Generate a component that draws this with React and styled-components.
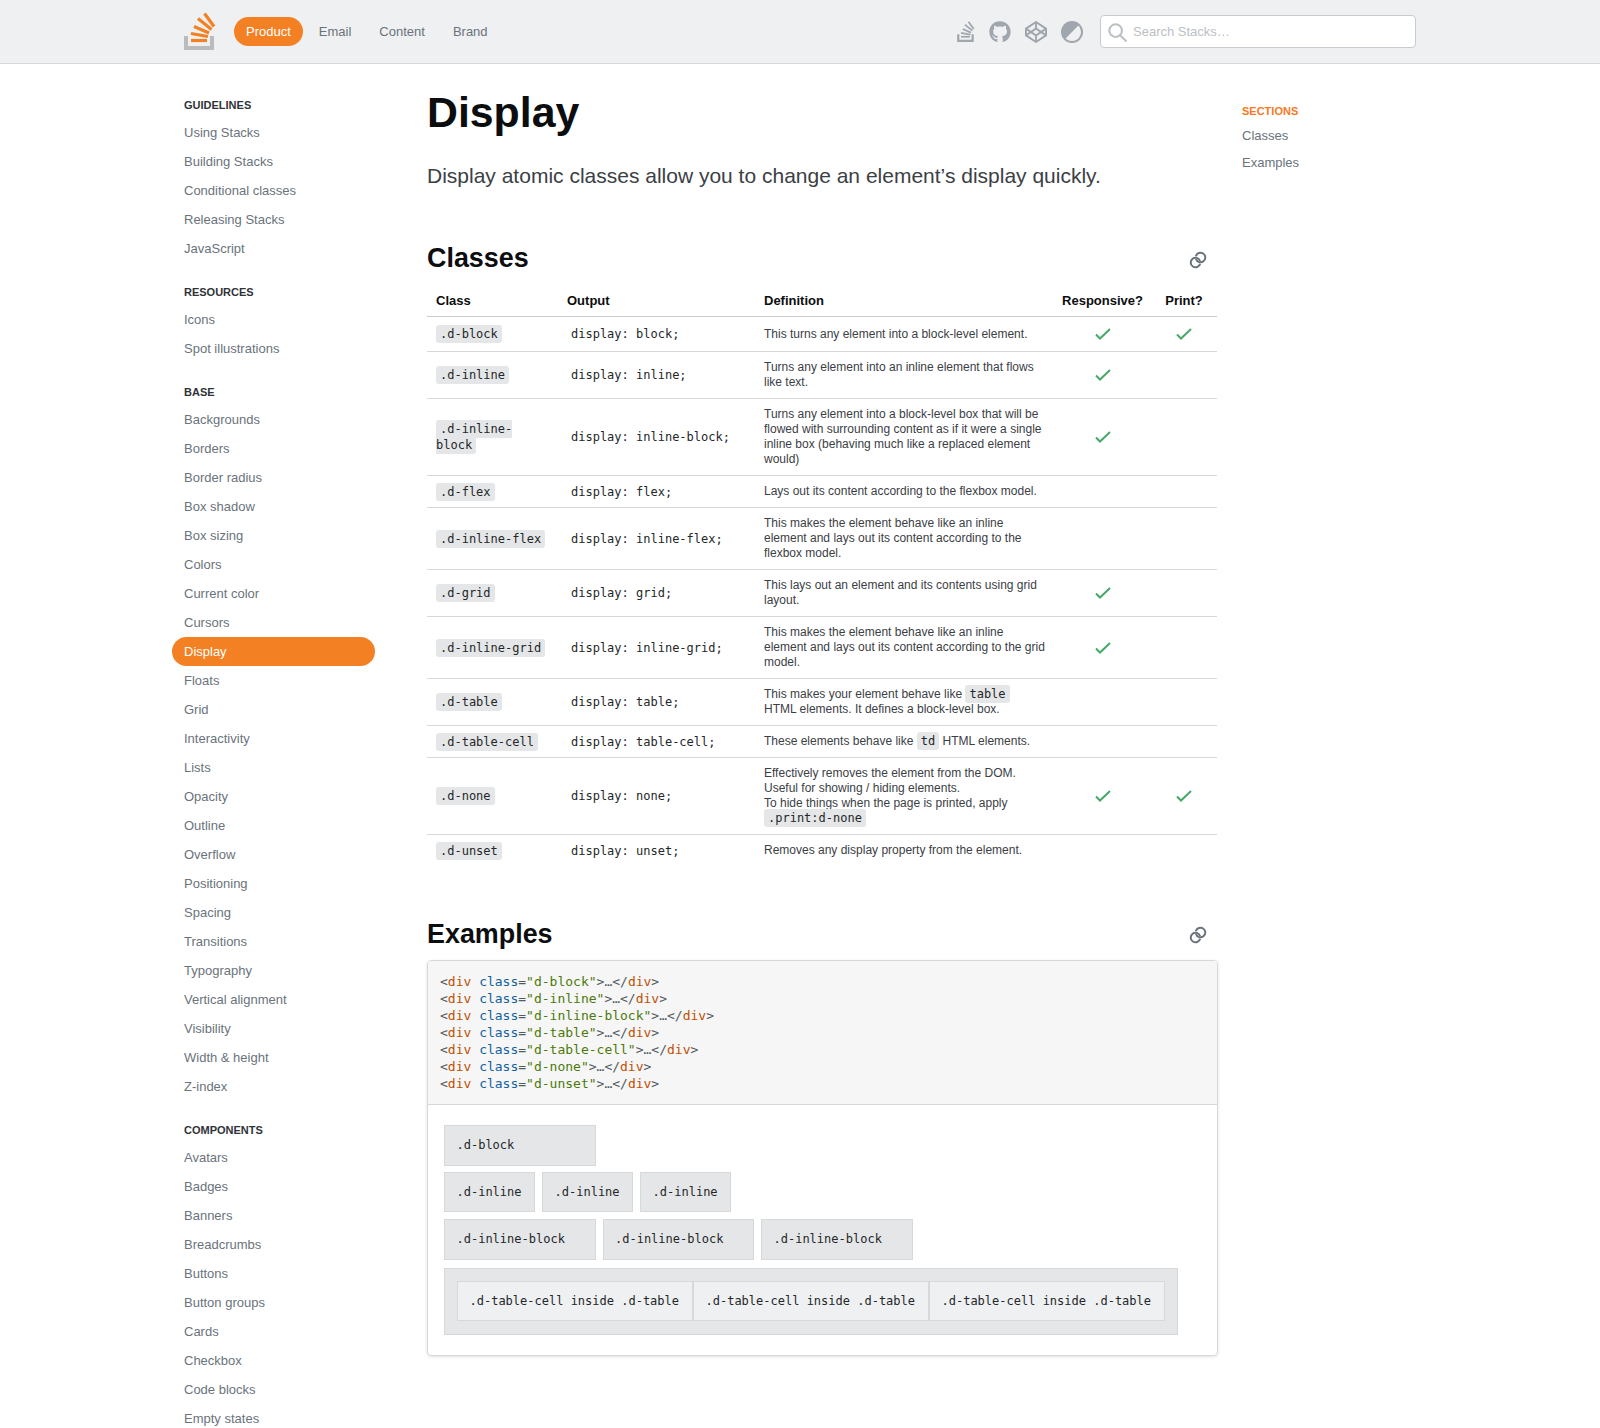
import React from 'react'
import styled, { createGlobalStyle } from 'styled-components'
import { FaGithub, FaCodepen } from 'react-icons/fa'

const mono = `"DejaVu Sans Mono", "Liberation Mono", monospace`

const GlobalStyle = createGlobalStyle`
  html, body {
    margin: 0;
    padding: 0;
    height: 1428px;
    overflow: hidden;
    background: #fff;
    font-family: "Liberation Sans", Arial, sans-serif;
    font-size: 13px;
    color: #3b4045;
  }
`

const navGroups = [
  {
    title: 'Guidelines',
    items: ['Using Stacks', 'Building Stacks', 'Conditional classes', 'Releasing Stacks', 'JavaScript'],
  },
  { title: 'Resources', items: ['Icons', 'Spot illustrations'] },
  {
    title: 'Base',
    items: [
      'Backgrounds', 'Borders', 'Border radius', 'Box shadow', 'Box sizing', 'Colors', 'Current color',
      'Cursors', 'Display', 'Floats', 'Grid', 'Interactivity', 'Lists', 'Opacity', 'Outline', 'Overflow',
      'Positioning', 'Spacing', 'Transitions', 'Typography', 'Vertical alignment', 'Visibility',
      'Width & height', 'Z-index',
    ],
  },
  {
    title: 'Components',
    items: [
      'Avatars', 'Badges', 'Banners', 'Breadcrumbs', 'Buttons', 'Button groups', 'Cards', 'Checkbox',
      'Code blocks', 'Empty states',
    ],
  },
]

const Code = styled.code`
  font-family: ${mono};
  font-size: 12px;
  background: #e4e6e8;
  color: #242729;
  padding: 2px 4px;
  border-radius: 3px;
  box-decoration-break: slice;
`

const rows = [
  { name: '.d-block', output: 'display: block;', def: 'This turns any element into a block-level element.', r: true, p: true },
  { name: '.d-inline', output: 'display: inline;', def: 'Turns any element into an inline element that flows like text.', r: true },
  {
    name: '.d-inline-block',
    output: 'display: inline-block;',
    def: 'Turns any element into a block-level box that will be flowed with surrounding content as if it were a single inline box (behaving much like a replaced element would)',
    r: true,
  },
  { name: '.d-flex', output: 'display: flex;', def: 'Lays out its content according to the flexbox model.' },
  {
    name: '.d-inline-flex',
    output: 'display: inline-flex;',
    def: 'This makes the element behave like an inline element and lays out its content according to the flexbox model.',
  },
  { name: '.d-grid', output: 'display: grid;', def: 'This lays out an element and its contents using grid layout.', r: true },
  {
    name: '.d-inline-grid',
    output: 'display: inline-grid;',
    def: 'This makes the element behave like an inline element and lays out its content according to the grid model.',
    r: true,
  },
  {
    name: '.d-table',
    output: 'display: table;',
    def: (
      <>
        This makes your element behave like <Code>table</Code> HTML elements. It defines a block-level box.
      </>
    ),
  },
  {
    name: '.d-table-cell',
    output: 'display: table-cell;',
    def: (
      <>
        These elements behave like <Code>td</Code> HTML elements.
      </>
    ),
  },
  {
    name: '.d-none',
    output: 'display: none;',
    def: (
      <>
        Effectively removes the element from the DOM.
        <br />
        Useful for showing / hiding elements.
        <br />
        To hide things when the page is printed, apply <Code>.print:d-none</Code>
      </>
    ),
    r: true,
    p: true,
  },
  { name: '.d-unset', output: 'display: unset;', def: 'Removes any display property from the element.' },
]

const snippets = ['d-block', 'd-inline', 'd-inline-block', 'd-table', 'd-table-cell', 'd-none', 'd-unset']

const Logo = ({ width, height, tray, bars }) => (
  <svg width={width} height={height} viewBox="0 0 32 38" fill="none">
    <path d="M2 24v12h26V24" stroke={tray} strokeWidth="4" />
    <g stroke={bars} strokeWidth="3.2">
      <path d="M7 28.5h16" />
      <path d="M7 21.5l17 3" />
      <path d="M10 14.5l15 6.5" />
      <path d="M14 6.5l13.5 11" />
      <path d="M20.5 1.5l9.5 13" />
    </g>
  </svg>
)

const Contrast = () => (
  <svg width="22" height="22" viewBox="0 0 22 22">
    <circle cx="11" cy="11" r="11" fill="#9fa6ad" />
    <path d="M17.4 4.6A9 9 0 0 1 4.6 17.4z" fill="#eff0f1" />
  </svg>
)

const SearchGlyph = () => (
  <svg width="19" height="19" viewBox="0 0 18 18" fill="none" stroke="#bbc0c4" strokeWidth="2">
    <circle cx="7.2" cy="7.2" r="6" />
    <path d="M11.5 11.5L17.5 17.5" />
  </svg>
)

const LinkGlyph = () => (
  <svg width="18" height="18" viewBox="0 0 18 18" fill="none" stroke="#6a737c" strokeWidth="2">
    <path d="M6.84 5.34A4.8 4.8 0 1 1 6.93 7.98" />
    <path d="M11.16 12.66A4.8 4.8 0 1 1 11.07 10.02" />
  </svg>
)

const CheckGlyph = () => (
  <svg width="18" height="18" viewBox="0 0 18 18" fill="none" stroke="#48a868" strokeWidth="2">
    <path d="M2 9.5l4 4 10-9.5" />
  </svg>
)

const Header = styled.header`
  height: 63px;
  box-sizing: content-box;
  background: #eff0f1;
  border-bottom: 1px solid #d6d9dc;
  padding: 0 184px;
  display: flex;
  align-items: center;
`
const LogoLink = styled.a`
  display: flex;
  margin-right: 18px;
  margin-top: -1px;
`
const Tabs = styled.nav`
  display: flex;
  gap: 4px;
`
const Tab = styled.a`
  height: 29px;
  line-height: 29px;
  padding: 0 12px;
  border-radius: 15px;
  background: ${(p) => (p.$active ? '#f48024' : 'transparent')};
  color: ${(p) => (p.$active ? '#fff' : '#6a737c')};
`
const IconLinks = styled.div`
  margin-left: auto;
  margin-right: 17px;
  display: flex;
  align-items: center;
  gap: 14px;
  color: #9fa6ad;
`
const SearchBox = styled.div`
  position: relative;
  width: 316px;
  svg {
    position: absolute;
    left: 8px;
    top: 8px;
  }
`
const SearchInput = styled.input`
  display: block;
  width: 100%;
  height: 33px;
  box-sizing: border-box;
  border: 1px solid #c8ccd0;
  border-radius: 4px;
  padding: 0 8px 0 32px;
  font: 13px "Liberation Sans", Arial, sans-serif;
  background: #fff;
  &::placeholder {
    color: #bbc0c4;
    opacity: 1;
  }
`
const Page = styled.div`
  display: grid;
  grid-template-columns: 203px 790px 1fr;
  column-gap: 52px;
  padding-left: 172px;
`
const Sidebar = styled.aside`
  padding-top: 34px;
`
const NavGroup = styled.section`
  margin-bottom: 22px;
`
const GroupTitle = styled.h5`
  margin: 0 0 5px;
  padding-left: 12px;
  font-size: 11px;
  line-height: 15px;
  font-weight: 700;
  text-transform: uppercase;
  color: #2f3337;
`
const NavItem = styled.a`
  display: block;
  height: 29px;
  line-height: 29px;
  padding-left: 12px;
  border-radius: 15px;
  background: ${(p) => (p.$active ? '#f48024' : 'transparent')};
  color: ${(p) => (p.$active ? '#fff' : '#6a737c')};
`
const Main = styled.main`
  padding-top: 22px;
`
const Title = styled.h1`
  margin: 0 0 24px;
  font-size: 42.8px;
  line-height: 52px;
  font-weight: 700;
  color: #0c0d0e;
`
const Lede = styled.p`
  margin: 0 0 51px;
  font-size: 21px;
  line-height: 28px;
  color: #3b4045;
`
const SectionHead = styled.div`
  display: flex;
  align-items: center;
  justify-content: space-between;
  padding-right: 10px;
  margin-bottom: ${(p) => p.$gap}px;
  svg {
    margin-top: ${(p) => p.$iconDrop}px;
  }
`
const SectionTitle = styled.h2`
  margin: 0;
  font-size: 26.9px;
  line-height: 34px;
  font-weight: 700;
  color: #0c0d0e;
`
const Table = styled.table`
  width: 790px;
  table-layout: fixed;
  border-collapse: collapse;
  margin-bottom: 51px;
`
const Th = styled.th`
  padding: ${(p) => (p.$center ? '8px 0' : '8px 9px')};
  font-size: 13px;
  line-height: 15px;
  font-weight: 700;
  text-align: ${(p) => (p.$center ? 'center' : 'left')};
  color: #0c0d0e;
  border-bottom: 1px solid #c8ccd0;
  white-space: nowrap;
`
const Tr = styled.tr`
  border-bottom: 1px solid #d6d9dc;
  &:last-child {
    border-bottom: 0;
  }
`
const Td = styled.td`
  padding: 8px 9px;
  font-size: 12px;
  line-height: 15px;
  vertical-align: middle;
  color: #3b4045;
  svg {
    display: block;
    margin: 0 auto;
  }
`
const CodeTd = styled(Td)`
  padding: 7.5px 9px;
  line-height: 16px;
`
const PlainCode = styled.code`
  font-family: ${mono};
  font-size: 12px;
  color: #242729;
  padding: 0 4px;
  white-space: nowrap;
`
const Card = styled.div`
  margin-right: -1px;
  border: 1px solid #d6d9dc;
  border-radius: 4px;
  box-shadow: 0 1px 3px rgba(12, 13, 14, 0.12);
  overflow: hidden;
`
const Snippet = styled.pre`
  margin: 0;
  padding: 12px;
  background: #f6f6f6;
  border-bottom: 1px solid #d6d9dc;
  font-family: ${mono};
  font-size: 13px;
  line-height: 17px;
  color: #535a60;
`
const TagName = styled.span`
  color: #c04f00;
`
const AttrName = styled.span`
  color: #10619e;
`
const AttrValue = styled.span`
  color: #4b7a0a;
`
const Demo = styled.div`
  padding: 20px 16px;
  display: flex;
  flex-direction: column;
  gap: 7px;
`
const DemoRow = styled.div`
  display: flex;
  gap: 7px;
  &:first-child {
    margin-bottom: -1px;
  }
`
const DemoBox = styled.div`
  box-sizing: border-box;
  width: ${(p) => (p.$wide ? '151.5px' : 'auto')};
  height: ${(p) => (p.$wide ? '41px' : '40px')};
  padding: 0 12.5px 0 11.5px;
  line-height: 38px;
  border: 1px solid #d6d9dc;
  background: #e4e6e8;
  font-family: ${mono};
  font-size: 12px;
  color: #242729;
`
const DemoTable = styled.div`
  display: flex;
  width: 734px;
  box-sizing: border-box;
  padding: 12px 12px 13px;
  margin-top: 1px;
  background: #e4e6e8;
  border: 1px solid #d6d9dc;
`
const DemoCell = styled.div`
  flex: 1;
  height: 40px;
  box-sizing: border-box;
  padding: 0 11.5px;
  line-height: 38px;
  background: #eff0f1;
  border: 1px solid #d6d9dc;
  font-family: ${mono};
  font-size: 12px;
  color: #242729;
  white-space: nowrap;
`
const Aside = styled.aside`
  padding-top: 40px;
  margin-left: -27px;
`
const AsideTitle = styled.h5`
  margin: 0 0 3px;
  font-size: 11px;
  line-height: 15px;
  font-weight: 700;
  text-transform: uppercase;
  color: #f9781f;
`
const AsideLink = styled.a`
  display: block;
  height: 27px;
  line-height: 27px;
  color: #6a737c;
`

const App = () => {
  return (
    <>
      <GlobalStyle />
      <Header>
        <LogoLink>
          <Logo width={32} height={38} tray="#bcbbbb" bars="#f48024" />
        </LogoLink>
        <Tabs>
          <Tab $active>Product</Tab>
          <Tab>Email</Tab>
          <Tab>Content</Tab>
          <Tab>Brand</Tab>
        </Tabs>
        <IconLinks>
          <Logo width={18} height={21} tray="#9fa6ad" bars="#9fa6ad" />
          <FaGithub size={22} />
          <FaCodepen size={22} />
          <Contrast />
        </IconLinks>
        <SearchBox>
          <SearchInput placeholder="Search Stacks…" />
          <SearchGlyph />
        </SearchBox>
      </Header>
      <Page>
        <Sidebar>
          {navGroups.map((group) => (
            <NavGroup key={group.title}>
              <GroupTitle>{group.title}</GroupTitle>
              {group.items.map((item) => (
                <NavItem key={item} $active={item === 'Display'}>
                  {item}
                </NavItem>
              ))}
            </NavGroup>
          ))}
        </Sidebar>
        <Main>
          <Title>Display</Title>
          <Lede>Display atomic classes allow you to change an element’s display quickly.</Lede>
          <SectionHead $gap={10} $iconDrop={4}>
            <SectionTitle>Classes</SectionTitle>
            <LinkGlyph />
          </SectionHead>
          <Table>
            <colgroup>
              <col style={{ width: 131 }} />
              <col style={{ width: 197 }} />
              <col style={{ width: 299 }} />
              <col style={{ width: 97 }} />
              <col style={{ width: 66 }} />
            </colgroup>
            <thead>
              <tr>
                <Th>Class</Th>
                <Th>Output</Th>
                <Th>Definition</Th>
                <Th $center>Responsive?</Th>
                <Th $center>Print?</Th>
              </tr>
            </thead>
            <tbody>
              {rows.map((row) => (
                <Tr key={row.name}>
                  <CodeTd>
                    <Code>{row.name}</Code>
                  </CodeTd>
                  <CodeTd>
                    <PlainCode>{row.output}</PlainCode>
                  </CodeTd>
                  <Td>{row.def}</Td>
                  <Td>{row.r && <CheckGlyph />}</Td>
                  <Td>{row.p && <CheckGlyph />}</Td>
                </Tr>
              ))}
            </tbody>
          </Table>
          <SectionHead $gap={9} $iconDrop={2}>
            <SectionTitle>Examples</SectionTitle>
            <LinkGlyph />
          </SectionHead>
          <Card>
            <Snippet>
              {snippets.map((name) => (
                <div key={name}>
                  &lt;<TagName>div</TagName> <AttrName>class</AttrName>=<AttrValue>"{name}"</AttrValue>&gt;…&lt;/
                  <TagName>div</TagName>&gt;
                </div>
              ))}
            </Snippet>
            <Demo>
              <DemoRow>
                <DemoBox $wide>.d-block</DemoBox>
              </DemoRow>
              <DemoRow>
                <DemoBox>.d-inline</DemoBox>
                <DemoBox>.d-inline</DemoBox>
                <DemoBox>.d-inline</DemoBox>
              </DemoRow>
              <DemoRow>
                <DemoBox $wide>.d-inline-block</DemoBox>
                <DemoBox $wide>.d-inline-block</DemoBox>
                <DemoBox $wide>.d-inline-block</DemoBox>
              </DemoRow>
              <DemoTable>
                <DemoCell>.d-table-cell inside .d-table</DemoCell>
                <DemoCell>.d-table-cell inside .d-table</DemoCell>
                <DemoCell>.d-table-cell inside .d-table</DemoCell>
              </DemoTable>
            </Demo>
          </Card>
        </Main>
        <Aside>
          <AsideTitle>Sections</AsideTitle>
          <AsideLink>Classes</AsideLink>
          <AsideLink>Examples</AsideLink>
        </Aside>
      </Page>
    </>
  )
}

export default App
